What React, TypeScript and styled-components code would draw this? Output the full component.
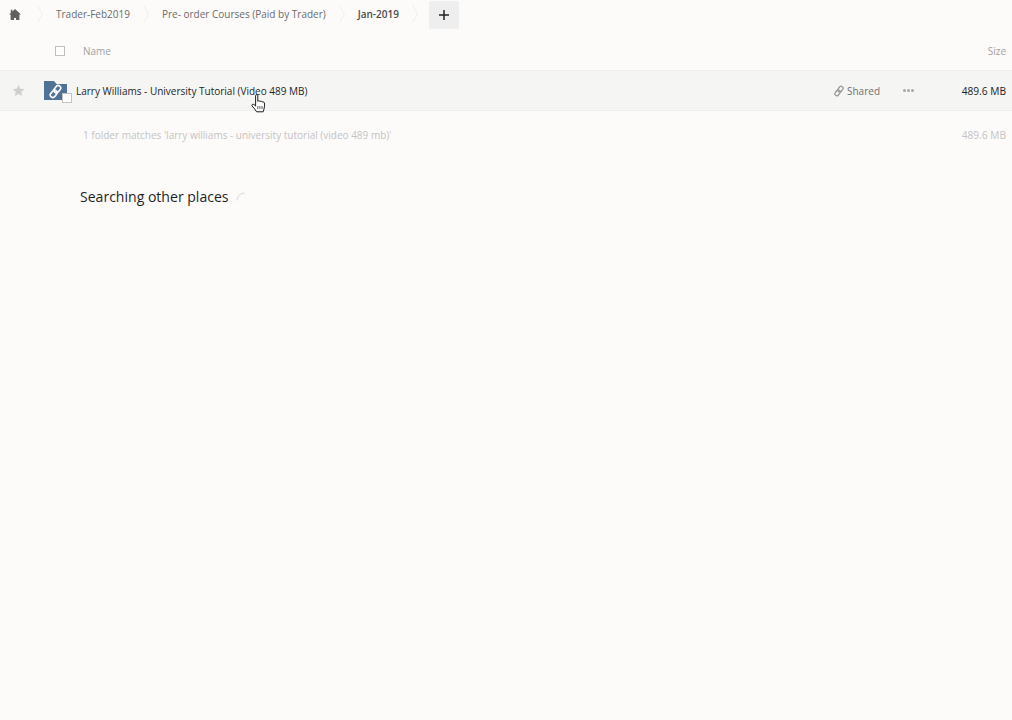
import styled, { createGlobalStyle } from "styled-components";

const GlobalStyle = createGlobalStyle`
  html, body {
    margin: 0;
    height: 100%;
    background: #fcfbfa;
    font-family: "Open Sans", "Liberation Sans", sans-serif;
  }
`;

const crumbs = [
  { name: "Trader-Feb2019", current: false },
  { name: "Pre- order Courses (Paid by Trader)", current: false },
  { name: "Jan-2019", current: true },
];

function Chevron() {
  return (
    <ChevronSvg width="6" height="18" viewBox="0 0 6 18">
      <path d="M0.5 0.5 L5.5 9 L0.5 17.5" fill="none" stroke="#eeeeec" strokeWidth="1" />
    </ChevronSvg>
  );
}

function LinkIcon({ size, color, weight }: { size: number; color: string; weight: number }) {
  return (
    <svg width={size} height={size} viewBox="0 0 24 24" fill="none" stroke={color} strokeWidth={weight}>
      <g transform="rotate(38 12 12)">
        <rect x="8" y="1" width="8" height="12.5" rx="4" />
        <rect x="8" y="10.5" width="8" height="12.5" rx="4" />
      </g>
    </svg>
  );
}

export default function App() {
  return (
    <Page>
      <GlobalStyle />
      <Breadcrumb>
        <HomeButton>
          <svg width="12" height="11" viewBox="0 0 12 11">
            <path d="M6 0 L12 5.6 H10.4 V11 H7 V9 H5 V11 H1.6 V5.6 H0 L1.8 3.9 V.8 H3.4 V2.4 Z" fill="#616161" />
          </svg>
        </HomeButton>
        <Chevron />
        {crumbs.map((c) => (
          <Crumb key={c.name}>
            <CrumbName $current={c.current}>{c.name}</CrumbName>
            <Chevron />
          </Crumb>
        ))}
        <AddButton>
          <svg width="10" height="10" viewBox="0 0 10 10">
            <path d="M5 0 V10 M0 5 H10" stroke="#222" strokeWidth="1.5" />
          </svg>
        </AddButton>
      </Breadcrumb>

      <HeaderRow>
        <Checkbox />
        <HeaderName>Name</HeaderName>
        <HeaderSize>Size</HeaderSize>
      </HeaderRow>

      <FileRow>
        <StarCell>
          <svg width="13" height="13" viewBox="0 0 24 24">
            <path d="M12 1.5 L15.2 8.6 L23 9.4 L17.1 14.6 L18.9 22.3 L12 18.3 L5.1 22.3 L6.9 14.6 L1 9.4 L8.8 8.6 Z" fill="#cfcfcf" />
          </svg>
        </StarCell>
        <FolderCell>
          <svg width="23" height="19" viewBox="0 0 23 19">
            <path d="M0 0 H10 L12.5 3 H23 V19 H0 Z" fill="#4f7296" />
          </svg>
          <FolderLink>
            <LinkIcon size={15} color="#ffffff" weight={2.6} />
          </FolderLink>
          <FolderCheck />
        </FolderCell>
        <FileName>Larry Williams - University Tutorial (Video 489 MB)</FileName>
        <SharedAction>
          <LinkIcon size={12} color="#9a9a9a" weight={2.6} />
          Shared
        </SharedAction>
        <MoreDots>
          <Dot />
          <Dot />
          <Dot />
        </MoreDots>
        <FileSize>489.6 MB</FileSize>
      </FileRow>

      <SummaryRow>
        <SummaryText>1 folder matches 'larry williams - university tutorial (video 489 mb)'</SummaryText>
        <SummarySize>489.6 MB</SummarySize>
      </SummaryRow>

      <SearchingTitle>
        Searching other places
        <Spinner width="9" height="9" viewBox="0 0 9 9">
          <path d="M1 8.5 A7.5 7.5 0 0 1 8.5 1" fill="none" stroke="#d6d6d6" strokeWidth="1" />
        </Spinner>
      </SearchingTitle>

      <Cursor>
        <svg width="15" height="19" viewBox="0 0 15 19">
          <path
            d="M4.6 1.6 C4.6 .4 6.8 .4 6.8 1.6 V7.4 C7.2 6.6 8.8 6.6 9 7.6 C9.4 6.9 10.9 7 11.1 8.1 C11.6 7.6 13.2 7.8 13.4 9 C13.8 11.5 13.4 14 12.2 17.8 H5.6 C4.6 15.6 2.6 14 1.1 12 C.3 10.8 1.9 9.6 3 10.5 L4.6 12 Z"
            fill="#fff"
            stroke="#1c1c1c"
            strokeWidth="1"
            strokeLinejoin="round"
          />
          <path d="M6.8 12 V15 M8.9 12 V15 M11 12 V15" stroke="#1c1c1c" strokeWidth=".7" />
        </svg>
      </Cursor>
    </Page>
  );
}

const Page = styled.div`
  position: relative;
  min-height: 720px;
  display: flex;
  flex-direction: column;
  overflow: hidden;
`;

const Breadcrumb = styled.div`
  display: flex;
  align-items: center;
  height: 28px;
  margin-bottom: 3px;
`;

const HomeButton = styled.div`
  display: flex;
  align-items: center;
  padding-left: 9px;
  padding-right: 16px;
`;

const ChevronSvg = styled.svg`
  flex: none;
`;

const Crumb = styled.div`
  display: flex;
  align-items: center;
  gap: 13px;
  padding-left: 13px;
`;

const CrumbName = styled.span<{ $current: boolean }>`
  font-size: 10px;
  color: ${(p) => (p.$current ? "#4a4a4a" : "#6b6b6b")};
  font-weight: ${(p) => (p.$current ? 600 : 400)};
  white-space: nowrap;
`;

const AddButton = styled.div`
  display: flex;
  align-items: center;
  justify-content: center;
  flex: none;
  width: 30px;
  height: 28px;
  margin-left: 11px;
  margin-top: 2px;
  background: #eeeeee;
  border-radius: 2px;
`;

const HeaderRow = styled.div`
  display: flex;
  align-items: center;
  height: 39px;
  border-bottom: 1px solid #eeeeec;
`;

const Checkbox = styled.span`
  flex: none;
  width: 8px;
  height: 8px;
  margin-left: 55px;
  border: 1px solid #bdbdbd;
  background: #fff;
`;

const HeaderName = styled.span`
  margin-left: 18px;
  font-size: 10px;
  color: #a2a2a2;
`;

const HeaderSize = styled.span`
  margin-left: auto;
  margin-right: 6px;
  font-size: 10px;
  color: #a2a2a2;
`;

const FileRow = styled.div`
  display: flex;
  align-items: center;
  height: 39px;
  background: #f5f5f4;
  border-bottom: 1px solid #eeeeec;
`;

const StarCell = styled.div`
  display: flex;
  margin-left: 12px;
  width: 32px;
  flex: none;
`;

const FolderCell = styled.div`
  position: relative;
  display: flex;
  flex: none;
  width: 32px;
`;

const FolderLink = styled.span`
  position: absolute;
  left: 4px;
  top: 3px;
  display: flex;
`;

const FolderCheck = styled.span`
  position: absolute;
  left: 18px;
  top: 12px;
  width: 8px;
  height: 8px;
  border: 1px solid #c4c4c4;
  background: #fff;
`;

const FileName = styled.span`
  font-size: 10px;
  color: #1f1f1f;
  white-space: nowrap;
`;

const SharedAction = styled.span`
  display: flex;
  align-items: center;
  gap: 2px;
  margin-left: auto;
  font-size: 10px;
  color: #6f6f6f;
`;

const MoreDots = styled.span`
  display: flex;
  gap: 1px;
  margin-left: 23px;
  width: 11px;
`;

const Dot = styled.span`
  width: 3px;
  height: 3px;
  flex: none;
  border-radius: 50%;
  background: #a8a8a8;
`;

const FileSize = styled.span`
  width: 98px;
  text-align: right;
  padding-right: 6px;
  box-sizing: border-box;
  font-size: 10.2px;
  color: #222;
`;

const SummaryRow = styled.div`
  display: flex;
  align-items: center;
  justify-content: space-between;
  height: 48px;
  padding-left: 83px;
  padding-right: 6px;
`;

const SummaryText = styled.span`
  font-size: 10px;
  color: #c4c4c4;
`;

const SummarySize = styled.span`
  font-size: 10.2px;
  color: #c4c4c4;
`;

const SearchingTitle = styled.h3`
  display: flex;
  align-items: center;
  margin: 28px 0 0 80px;
  font-size: 14.05px;
  line-height: 20px;
  font-weight: 400;
  color: #1f1f1f;
`;

const Spinner = styled.svg`
  flex: none;
  margin-left: 7px;
  margin-top: -2px;
`;

const Cursor = styled.div`
  position: absolute;
  left: 251px;
  top: 94px;
  display: flex;
`;
